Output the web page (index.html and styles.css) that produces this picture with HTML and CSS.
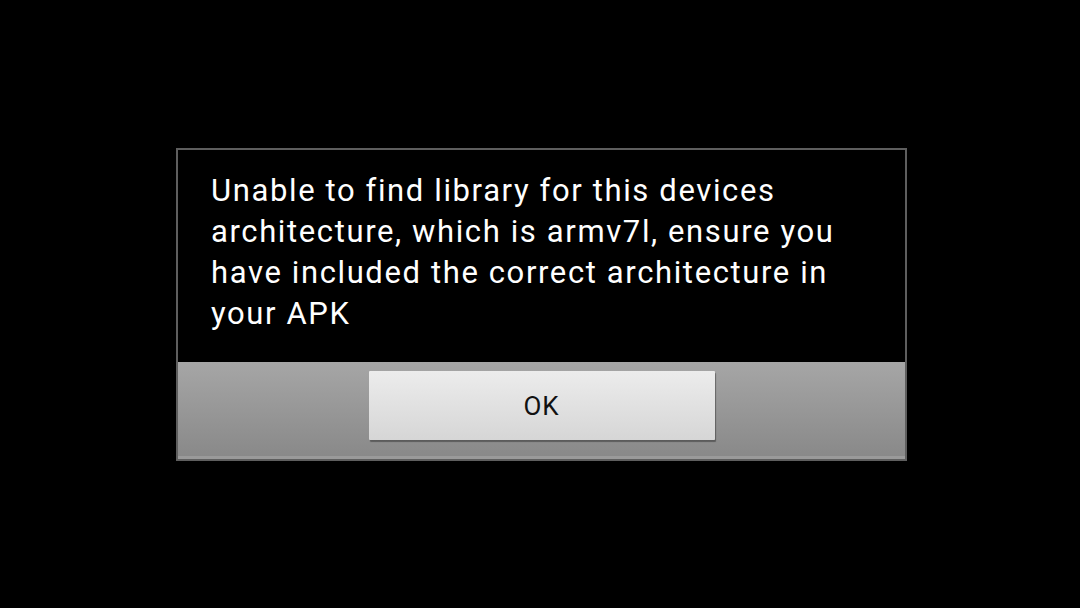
FILE: index.html
```html
<!DOCTYPE html>
<html lang="en">
<head>
    <meta charset="UTF-8">
    <meta name="viewport" content="width=device-width, initial-scale=1.0">
    <title>Error</title>
    <link rel="stylesheet" href="styles.css">
</head>
<body>
    <div class="dialog">
        <div class="message">
            Unable to find library for this devices architecture, which is armv7l, ensure you have included the correct architecture in your APK
        </div>
        <div class="buttons">
            <button class="ok-button">OK</button>
        </div>
    </div>
</body>
</html>
```

FILE: styles.css
```css
html, body {
    height: 100%;
}

body {
    margin: 0;
    background-color: #000;
    font-family: Roboto, "Noto Sans", sans-serif;
    display: flex;
    align-items: center;
    justify-content: center;
}

.dialog {
    width: 727px;
    margin-left: 3px;
    margin-top: 1px;
    border: 2px solid #5e5e5e;
    background-color: #000;
}

.message {
    height: 212px;
    box-sizing: border-box;
    padding: 20px 40px 0 33px;
    color: #fff;
    font-size: 31px;
    letter-spacing: 1.62px;
    line-height: 41px;
}

.buttons {
    display: flex;
    justify-content: center;
    padding: 9px 0 16px;
    background: linear-gradient(#a6a6a6, #898989);
    border-bottom: 3px solid #9a9a9a;
}

.ok-button {
    width: 346px;
    height: 69px;
    border: none;
    border-radius: 1px;
    background: linear-gradient(#ececec, #d6d6d6);
    box-shadow: 1px 2px 1px rgba(0, 0, 0, 0.35);
    font-family: Roboto, "Noto Sans", sans-serif;
    font-size: 26px;
    letter-spacing: 1px;
    color: #111;
    cursor: pointer;
}
```
